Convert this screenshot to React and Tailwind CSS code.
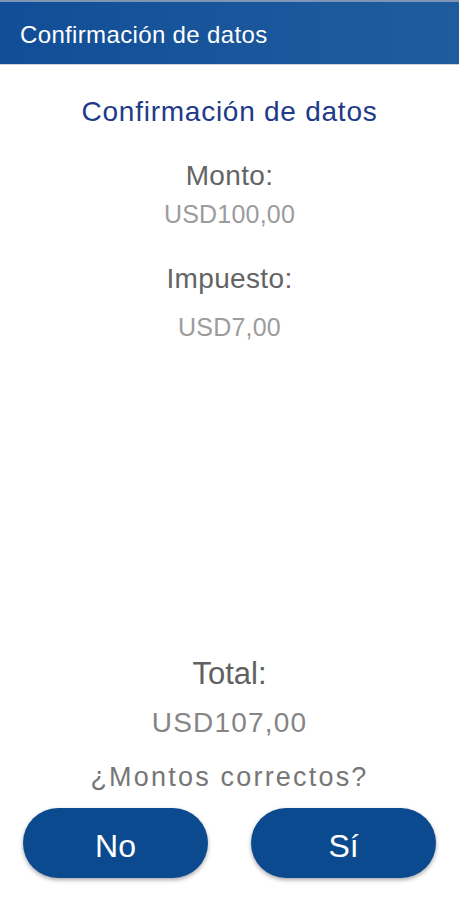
// App.jsx
// Data confirmation screen

const font = { fontFamily: '"Liberation Sans", Arial, sans-serif' }

const App = () => {
  return (
    <div className="w-[459px] h-[900px] bg-white flex flex-col text-center" style={font}>
      {/* Top bar */}
      <div className="h-[65px] shrink-0 border-t-2 border-t-[#8094b6] border-b border-b-[#cdd3dc] bg-gradient-to-r from-[#124e97] to-[#1f5c9e] pt-[21px] pl-[20px] text-left">
        <span className="block text-white text-[24px] leading-[24px] tracking-[0.35px]">Confirmación de datos</span>
      </div>

      {/* Title */}
      <h1 className="mt-[33px] text-[28px] leading-[28px] text-[#1e3a8a] tracking-[0.75px]">
        Confirmación de datos
      </h1>

      {/* Amounts */}
      <p className="mt-[36px] text-[28px] leading-[28px] text-[#646464] tracking-[0.35px]">Monto:</p>
      <p className="mt-[12px] text-[25px] leading-[25px] text-[#9c9c9c] tracking-[0.2px]">USD100,00</p>
      <p className="mt-[38px] text-[28px] leading-[28px] text-[#646464] tracking-[0.35px]">Impuesto:</p>
      <p className="mt-[22px] text-[25px] leading-[25px] text-[#9c9c9c] tracking-[0.2px]">USD7,00</p>

      <div className="flex-1" />

      {/* Total */}
      <p className="text-[31px] leading-[31px] text-[#616161]">Total:</p>
      <p className="mt-[20px] text-[28px] leading-[28px] text-[#858585] tracking-[1.2px]">USD107,00</p>
      <p className="mt-[27px] text-[27px] leading-[27px] text-[#767676] tracking-[2.2px]">¿Montos correctos?</p>

      {/* Buttons */}
      <div className="mt-[17px] mb-[22px] px-[23px] flex justify-between">
        <button className="w-[185px] h-[70px] pt-[6px] rounded-full bg-[#0c4a8f] text-white text-[32px] leading-[32px] shadow-[0_2px_4px_rgba(0,0,0,0.35)]">
          No
        </button>
        <button className="w-[185px] h-[70px] pt-[6px] rounded-full bg-[#0c4a8f] text-white text-[32px] leading-[32px] shadow-[0_2px_4px_rgba(0,0,0,0.35)]">
          Sí
        </button>
      </div>
    </div>
  )
}

export default App
